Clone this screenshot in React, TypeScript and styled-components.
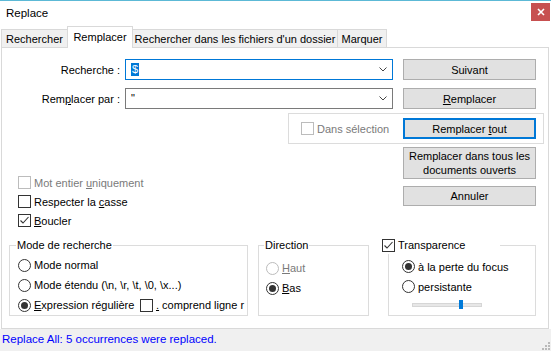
import React from "react";
import styled, { createGlobalStyle } from "styled-components";

const GlobalStyle = createGlobalStyle`
  html, body {
    margin: 0;
    padding: 0;
    background: #ffffff;
  }
  body {
    font-family: "Liberation Sans", Arial, sans-serif;
    font-size: 11px;
    line-height: 14px;
    color: #000000;
  }
  * {
    box-sizing: border-box;
  }
`;

const Window = styled.div`
  width: 551px;
  height: 351px;
  display: flex;
  flex-direction: column;
  border-top: 1px solid #5cb9d6;
  background: #ffffff;
  overflow: hidden;
`;

const TitleBar = styled.div`
  height: 24px;
  display: flex;
  justify-content: space-between;
  align-items: flex-start;
`;

const Title = styled.span`
  padding: 5px 0 0 6px;
  font-size: 11.5px;
`;

const CloseButton = styled.div`
  width: 19px;
  height: 18px;
  margin: 2px 1px 0 0;
  display: flex;
  align-items: center;
  justify-content: center;
  background: #c75050;
`;

const TabStrip = styled.div`
  height: 22px;
  padding-left: 1px;
  display: flex;
  align-items: flex-end;
`;

const Tab = styled.div<{ $w: number; $active?: boolean }>`
  width: ${(p) => p.$w}px;
  height: ${(p) => (p.$active ? 22 : 18)}px;
  margin-left: -1px;
  margin-bottom: ${(p) => (p.$active ? -1 : 0)}px;
  padding-bottom: ${(p) => (p.$active ? 2 : 0)}px;
  position: relative;
  z-index: ${(p) => (p.$active ? 1 : 0)};
  display: flex;
  align-items: center;
  justify-content: center;
  white-space: nowrap;
  overflow: hidden;
  border: 1px solid #d9d9d9;
  border-bottom: none;
  background: ${(p) => (p.$active ? "#ffffff" : "#f0f0f0")};

  &:first-child {
    margin-left: 0;
  }
`;

const Panel = styled.div`
  height: 282px;
  margin: 0 2px 0 1px;
  padding-top: 11px;
  border: 1px solid #d9d9d9;
  display: flex;
  flex-direction: column;
`;

const FieldRow = styled.div<{ $gap?: number }>`
  display: flex;
  align-items: center;
  margin-top: ${(p) => p.$gap ?? 0}px;
`;

const FieldLabel = styled.label`
  width: 123px;
  padding-right: 5px;
  text-align: right;
  white-space: nowrap;
`;

const Combo = styled.div<{ $focused?: boolean }>`
  width: 268px;
  height: 21px;
  margin-right: 10px;
  padding: 0 5px;
  display: flex;
  align-items: center;
  justify-content: space-between;
  border: 1px solid ${(p) => (p.$focused ? "#0078d7" : "#7a7a7a")};
  background: #ffffff;
`;

const Selected = styled.span`
  padding: 0 1px;
  line-height: 13px;
  background: #0078d7;
  color: #ffffff;
`;

const QuoteText = styled.span`
  align-self: flex-start;
  padding-top: 2px;
`;

const Button = styled.div<{ $h?: number; $primary?: boolean }>`
  width: 133px;
  height: ${(p) => p.$h ?? 21}px;
  display: flex;
  align-items: center;
  justify-content: center;
  text-align: center;
  line-height: 14px;
  background: #e1e1e1;
  border: ${(p) => (p.$primary ? "2px solid #0078d7" : "1px solid #adadad")};
`;

const Mnemonic = styled.span`
  text-decoration: underline;
`;

const SelectionFrame = styled.div`
  width: 256px;
  height: 31px;
  margin: 4px 0 0 286px;
  padding: 0 7px 0 12px;
  display: flex;
  align-items: center;
  border: 1px solid #dcdcdc;
`;

const PushRight = styled.div`
  margin-left: auto;
`;

const MiddleRow = styled.div`
  display: flex;
  justify-content: space-between;
  margin-top: 3px;
`;

const CheckList = styled.div`
  padding: 26px 0 0 16px;
  display: flex;
  flex-direction: column;
`;

const ButtonColumn = styled.div`
  margin-right: 12px;
  display: flex;
  flex-direction: column;
  gap: 7px;
`;

const Option = styled.div<{ $h?: number; $w?: number; $disabled?: boolean }>`
  height: ${(p) => p.$h ?? 19}px;
  width: ${(p) => (p.$w ? `${p.$w}px` : "auto")};
  flex-shrink: 0;
  display: flex;
  align-items: center;
  gap: 3px;
  white-space: nowrap;
  color: ${(p) => (p.$disabled ? "#7a7a7a" : "#000000")};
`;

const Box = styled.span<{ $disabled?: boolean }>`
  width: 13px;
  height: 13px;
  flex-shrink: 0;
  display: flex;
  align-items: center;
  justify-content: center;
  border: 1px solid ${(p) => (p.$disabled ? "#bcbcbc" : "#333333")};
  background: #ffffff;
`;

const Radio = styled.span<{ $disabled?: boolean }>`
  width: 13px;
  height: 13px;
  flex-shrink: 0;
  display: flex;
  align-items: center;
  justify-content: center;
  border-radius: 50%;
  border: 1px solid ${(p) => (p.$disabled ? "#bcbcbc" : "#333333")};
  background: #ffffff;
`;

const RadioDot = styled.span`
  width: 7px;
  height: 7px;
  border-radius: 50%;
  background: #333333;
`;

const GroupRow = styled.div`
  display: flex;
  margin-top: 8px;
`;

const Group = styled.fieldset<{ $w: number; $ml: number; $pl: number; $pt: number }>`
  width: ${(p) => p.$w}px;
  height: 78px;
  min-width: 0;
  margin: 0 0 0 ${(p) => p.$ml}px;
  padding: ${(p) => p.$pt}px 0 0 ${(p) => p.$pl}px;
  border: 1px solid #dcdcdc;
  display: flex;
  flex-direction: column;
`;

const Legend = styled.legend<{ $offset?: number; $w?: number }>`
  margin-left: ${(p) => p.$offset ?? -2}px;
  padding: 0 1px;
  width: ${(p) => (p.$w ? `${p.$w}px` : "auto")};
  line-height: 14px;
  white-space: nowrap;
`;

const LegendInner = styled.span`
  display: inline-flex;
  align-items: center;
  gap: 3px;
`;

const ClipRow = styled.div`
  display: flex;
  align-items: center;
  height: 20px;
  overflow: hidden;
  white-space: nowrap;
`;

const SliderTrack = styled.div`
  position: relative;
  width: 70px;
  height: 4px;
  margin: 6px 0 0 10px;
  background: #e7e7e7;
  border: 1px solid #d6d6d6;
`;

const SliderThumb = styled.div`
  position: absolute;
  top: -4px;
  width: 4px;
  height: 9px;
  background: #007ad9;
`;

const StatusBar = styled.div`
  flex: 1;
  display: flex;
  justify-content: space-between;
  align-items: flex-start;
  padding: 3px 1px 0 2px;
  background: #f0f0f0;
`;

const StatusText = styled.span`
  color: #0000ff;
  font-size: 11.5px;
`;

const Grip = styled.svg`
  align-self: flex-end;
  margin-bottom: 1px;
`;

const Chevron = () => (
  <svg width="8" height="5" viewBox="0 0 8 5">
    <polyline points="0.5,0.5 4,4 7.5,0.5" fill="none" stroke="#444" strokeWidth="1" />
  </svg>
);

const CheckMark = () => (
  <svg width="11" height="11" viewBox="0 0 11 11">
    <polyline points="1.5,5.5 4,8 9.5,2" fill="none" stroke="#333" strokeWidth="1.1" />
  </svg>
);

const Check: React.FC<{ checked?: boolean; disabled?: boolean }> = ({ checked, disabled }) => (
  <Box $disabled={disabled}>{checked && <CheckMark />}</Box>
);

const RadioButton: React.FC<{ checked?: boolean; disabled?: boolean }> = ({ checked, disabled }) => (
  <Radio $disabled={disabled}>{checked && <RadioDot />}</Radio>
);

export default function App() {
  const opacity = 0.68;

  return (
    <>
      <GlobalStyle />
      <Window>
        <TitleBar>
          <Title>Replace</Title>
          <CloseButton>
            <svg width="8" height="8" viewBox="0 0 8 8">
              <path d="M1 1 L7 7 M7 1 L1 7" stroke="#fff" strokeWidth="1.6" />
            </svg>
          </CloseButton>
        </TitleBar>

        <TabStrip>
          <Tab $w={67}>Rechercher</Tab>
          <Tab $w={66} $active>
            Remplacer
          </Tab>
          <Tab $w={206}>Rechercher dans les fichiers d'un dossier</Tab>
          <Tab $w={50}>Marquer</Tab>
        </TabStrip>

        <Panel>
          <FieldRow>
            <FieldLabel>Recherche :</FieldLabel>
            <Combo $focused>
              <Selected>$</Selected>
              <Chevron />
            </Combo>
            <Button>Suivant</Button>
          </FieldRow>

          <FieldRow $gap={8}>
            <FieldLabel>
              Rem<Mnemonic>p</Mnemonic>lacer par :
            </FieldLabel>
            <Combo>
              <QuoteText>"</QuoteText>
              <Chevron />
            </Combo>
            <Button>
              <span>
                <Mnemonic>R</Mnemonic>emplacer
              </span>
            </Button>
          </FieldRow>

          <SelectionFrame>
            <Option $disabled>
              <Check disabled />
              Dans sélection
            </Option>
            <PushRight>
              <Button $primary>
                <span>
                  Remplacer <Mnemonic>t</Mnemonic>out
                </span>
              </Button>
            </PushRight>
          </SelectionFrame>

          <MiddleRow>
            <CheckList>
              <Option $disabled>
                <Check disabled />
                <span>
                  Mot entier <Mnemonic>u</Mnemonic>niquement
                </span>
              </Option>
              <Option>
                <Check />
                <span>
                  Respecter la <Mnemonic>c</Mnemonic>asse
                </span>
              </Option>
              <Option>
                <Check checked />
                <span>
                  <Mnemonic>B</Mnemonic>oucler
                </span>
              </Option>
            </CheckList>
            <ButtonColumn>
              <Button $h={32}>
                Remplacer dans tous les
                <br />
                documents ouverts
              </Button>
              <Button $h={20}>Annuler</Button>
            </ButtonColumn>
          </MiddleRow>

          <GroupRow>
            <Group $w={239} $ml={7} $pl={8} $pt={3}>
              <Legend>Mode de recherche</Legend>
              <Option $h={20}>
                <RadioButton />
                Mode normal
              </Option>
              <Option $h={20}>
                <RadioButton />
                {"Mode étendu (\\n, \\r, \\t, \\0, \\x...)"}
              </Option>
              <ClipRow>
                <Option $h={20} $w={122}>
                  <RadioButton checked />
                  <span>
                    <Mnemonic>E</Mnemonic>xpression régulière
                  </span>
                </Option>
                <Option $h={20}>
                  <Check />
                  <span>
                    <Mnemonic>.</Mnemonic> comprend ligne r
                  </span>
                </Option>
              </ClipRow>
            </Group>

            <Group $w={111} $ml={10} $pl={7} $pt={6}>
              <Legend>Direction</Legend>
              <Option $h={20} $disabled>
                <RadioButton disabled />
                <span>
                  <Mnemonic>H</Mnemonic>aut
                </span>
              </Option>
              <Option $h={20}>
                <RadioButton checked />
                <span>
                  <Mnemonic>B</Mnemonic>as
                </span>
              </Option>
            </Group>

            <Group $w={148} $ml={19} $pl={13} $pt={3}>
              <Legend $offset={-21} $w={119}>
                <LegendInner>
                  <Check checked />
                  Transparence
                </LegendInner>
              </Legend>
              <Option $h={20}>
                <RadioButton checked />à la perte du focus
              </Option>
              <Option $h={20}>
                <RadioButton />
                persistante
              </Option>
              <SliderTrack>
                <SliderThumb style={{ left: `${opacity * 100}%` }} />
              </SliderTrack>
            </Group>
          </GroupRow>
        </Panel>

        <StatusBar>
          <StatusText>Replace All: 5 occurrences were replaced.</StatusText>
          <Grip width="9" height="9" viewBox="0 0 9 9">
            <rect x="7" y="1" width="2" height="2" fill="#b9b9b9" />
            <rect x="4" y="4" width="2" height="2" fill="#b9b9b9" />
            <rect x="7" y="4" width="2" height="2" fill="#b9b9b9" />
            <rect x="1" y="7" width="2" height="2" fill="#b9b9b9" />
            <rect x="4" y="7" width="2" height="2" fill="#b9b9b9" />
            <rect x="7" y="7" width="2" height="2" fill="#b9b9b9" />
          </Grip>
        </StatusBar>
      </Window>
    </>
  );
}
